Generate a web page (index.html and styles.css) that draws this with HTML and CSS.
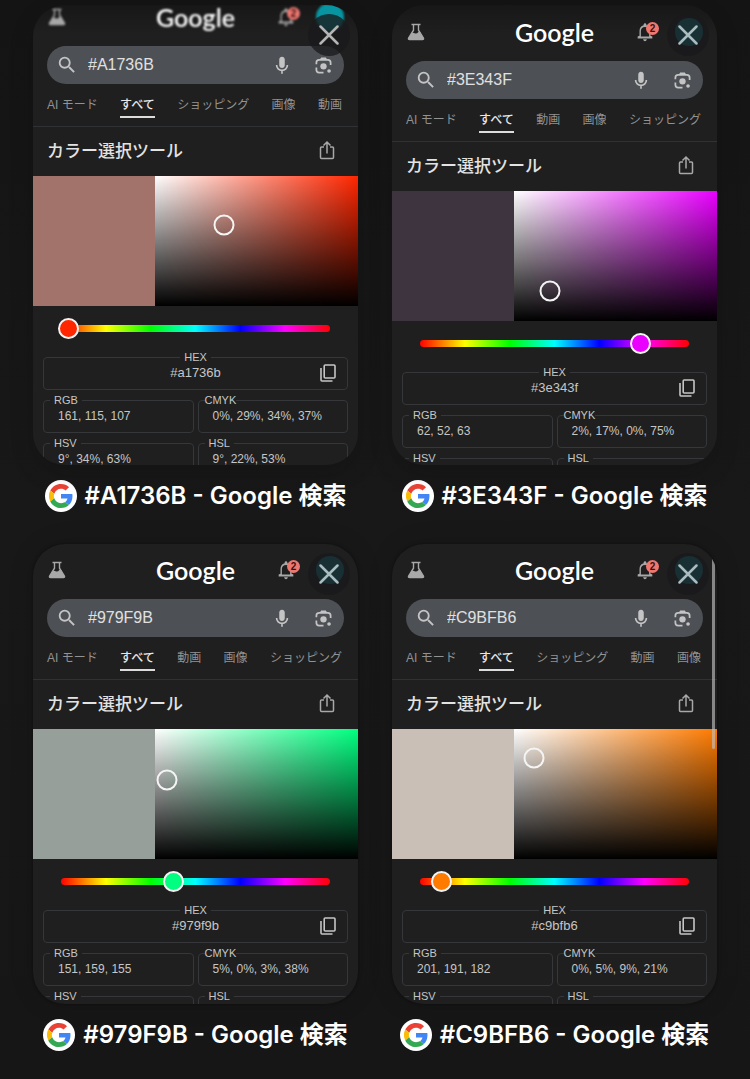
FILE: index.html
```
<!DOCTYPE html>
<html lang="ja">
<head>
<meta charset="utf-8">
<meta name="viewport" content="width=device-width, initial-scale=1">
<title>タブ一覧</title>
<link rel="stylesheet" href="styles.css">
</head>
<body>
<svg class="sprite" aria-hidden="true">
  <symbol id="flask" viewBox="0 0 18 18"><path d="M4.500 1.500h9M6.500 1.500v5.700L1.600 15q-.6 1.600 1 1.600h12.800q1.600 0 1-1.600L11.500 7.200V1.500" fill="none" stroke="currentColor" stroke-width="1.400"/><path d="M4.200 10.800q1.500-1.800 3.400-.6t3.800-1.100l1.500-.5 3.500 6.400q.6 1.800-1 1.800H2.600q-1.600 0-1-1.600z" fill="currentColor"/></symbol>
  <symbol id="bell" viewBox="0 0 24 24"><path d="M12 22c1.100 0 2-.9 2-2h-4c0 1.100.9 2 2 2zm6-6v-5c0-3.070-1.630-5.640-4.500-6.320V4c0-.83-.67-1.500-1.500-1.500s-1.500.67-1.500 1.500v.68C7.640 5.360 6 7.920 6 11v5l-2 1v2h16v-2l-2-1zm-1.500 1h-9v-6c0-2.480 1.510-4.500 4.500-4.500s4.500 2.020 4.500 4.500v6z" fill="currentColor"/></symbol>
  <symbol id="search" viewBox="0 0 24 24"><path d="M15.500 14h-.79l-.28-.27A6.470 6.470 0 0 0 16 9.500 6.500 6.500 0 1 0 9.500 16c1.610 0 3.090-.59 4.230-1.570l.27.28v.79l5 4.990L20.490 19l-4.990-5zm-6 0C7.010 14 5 11.990 5 9.500S7.010 5 9.500 5 14 7.010 14 9.500 11.990 14 9.500 14z" fill="currentColor"/></symbol>
  <symbol id="mic" viewBox="0 0 24 24"><path d="M12 15.500c1.900 0 3.300-1.400 3.300-3.300V5.300C15.300 3.400 13.900 2 12 2S8.700 3.400 8.700 5.300v6.900c0 1.900 1.400 3.300 3.300 3.300z" fill="currentColor"/><path d="M5.500 12a6.500 6.500 0 0 0 13 0M12 18.500v4" fill="none" stroke="currentColor" stroke-width="2"/></symbol>
  <symbol id="lens" viewBox="0 0 24 24"><path d="M3 10.500V8.500q0-3.500 3.500-3.500h11q3.500 0 3.500 3.500v3M3 14.500v3q0 3.500 3.500 3.500h5.500" fill="none" stroke="currentColor" stroke-width="2.200"/><path d="M7 5l2-3h6l2 3z" fill="currentColor"/><circle cx="12" cy="13" r="4" fill="currentColor"/><circle cx="19" cy="19" r="2.300" fill="currentColor"/></symbol>
  <symbol id="share" viewBox="0 0 16 20"><path d="M5 7H2.500Q1.500 7 1.500 8v9.500q0 1 1 1h11q1 0 1-1V8q0-1-1-1H11M8 13.500V2M4.500 5.500 8 2l3.500 3.500" fill="none" stroke="currentColor" stroke-width="1.500"/></symbol>
  <symbol id="copy" viewBox="0 0 16 18"><rect x="4.200" y="1" width="10.800" height="13" rx="1" fill="none" stroke="currentColor" stroke-width="1.600"/><path d="M1 4v12q0 1 1 1h10.500" fill="none" stroke="currentColor" stroke-width="1.600"/></symbol>
  <symbol id="close" viewBox="0 0 20 20"><path d="M1.500 1.500l17 17M18.500 1.500l-17 17" fill="none" stroke="currentColor" stroke-width="2.500" stroke-linecap="round"/></symbol>
  <symbol id="g" viewBox="0 0 48 48"><path fill="#ea4335" d="M24 9.500c3.540 0 6.710 1.220 9.210 3.600l6.850-6.850C35.900 2.380 30.470 0 24 0 14.620 0 6.510 5.380 2.560 13.220l7.980 6.190C12.430 13.720 17.740 9.500 24 9.500z"/><path fill="#4285f4" d="M46.980 24.550c0-1.570-.15-3.090-.38-4.550H24v9.020h12.940c-.58 2.960-2.260 5.480-4.780 7.180l7.730 6c4.510-4.180 7.090-10.360 7.090-17.650z"/><path fill="#fbbc05" d="M10.530 28.590a14.500 14.500 0 0 1 0-9.180l-7.980-6.190a24 24 0 0 0 0 21.560l7.980-6.190z"/><path fill="#34a853" d="M24 48c6.480 0 11.930-2.130 15.890-5.810l-7.730-6c-2.150 1.450-4.920 2.300-8.160 2.300-6.260 0-11.570-4.220-13.470-9.910l-7.980 6.190C6.510 42.620 14.620 48 24 48z"/></symbol>
</svg>
<main class="tabs-grid">

  <article class="tab">
    <div class="card card--faded">
      <div class="page page--scrolled">
        <header class="top">
          <svg class="flask"><use href="#flask"/></svg>
          <span class="logo">Google</span>
          <div class="account"><span class="alerts"><svg class="bell"><use href="#bell"/></svg><b class="badge">2</b></span><span class="avatar avatar--lit"></span></div>
        </header>
        <form class="search">
          <svg class="search__icon"><use href="#search"/></svg>
          <input class="search__box" type="text" aria-label="検索" value="#A1736B">
          <button class="icon-btn" type="button" aria-label="音声検索"><svg class="mic"><use href="#mic"/></svg></button>
          <button class="icon-btn" type="button" aria-label="画像で検索"><svg class="lens"><use href="#lens"/></svg></button>
        </form>
        <nav class="filters"><a href="#">AI モード</a><a class="is-on" href="#">すべて</a><a href="#">ショッピング</a><a href="#">画像</a><a href="#">動画</a></nav>
        <div class="heading"><h2>カラー選択ツール</h2><button class="icon-btn" type="button" aria-label="共有"><svg class="share"><use href="#share"/></svg></button></div>
        <div class="palette" style="--color:#a1736b;--hue:#ff2600"><div class="swatch"></div><div class="field"><span class="picker" style="left:34%;top:38%"></span></div></div>
        <div class="hue" style="--hue:#ff2600"><div class="hue__bar"></div><input class="hue__input" type="range" min="0" max="360" value="9" aria-label="色相"></div>
        <div class="values">
          <fieldset class="value value--hex"><legend>HEX</legend><div class="hex"><output>#a1736b</output><button class="icon-btn" type="button" aria-label="コピー"><svg class="copy"><use href="#copy"/></svg></button></div></fieldset>
          <fieldset class="value"><legend>RGB</legend><output>161, 115, 107</output></fieldset>
          <fieldset class="value"><legend class="tight">CMYK</legend><output>0%, 29%, 34%, 37%</output></fieldset>
          <fieldset class="value"><legend>HSV</legend><output>9°, 34%, 63%</output></fieldset>
          <fieldset class="value"><legend>HSL</legend><output>9°, 22%, 53%</output></fieldset>
        </div>
      </div>
      <button class="close" type="button" aria-label="タブを閉じる"><svg><use href="#close"/></svg></button>
    </div>
    <h3 class="caption"><span class="favicon"><svg><use href="#g"/></svg></span>#A1736B - Google 検索</h3>
  </article>

  <article class="tab">
    <div class="card card--faded">
      <div class="page page--pulled">
        <header class="top">
          <svg class="flask"><use href="#flask"/></svg>
          <span class="logo">Google</span>
          <div class="account"><span class="alerts"><svg class="bell"><use href="#bell"/></svg><b class="badge">2</b></span><span class="avatar"></span></div>
        </header>
        <form class="search">
          <svg class="search__icon"><use href="#search"/></svg>
          <input class="search__box" type="text" aria-label="検索" value="#3E343F">
          <button class="icon-btn" type="button" aria-label="音声検索"><svg class="mic"><use href="#mic"/></svg></button>
          <button class="icon-btn" type="button" aria-label="画像で検索"><svg class="lens"><use href="#lens"/></svg></button>
        </form>
        <nav class="filters"><a href="#">AI モード</a><a class="is-on" href="#">すべて</a><a href="#">動画</a><a href="#">画像</a><a href="#">ショッピング</a></nav>
        <div class="heading"><h2>カラー選択ツール</h2><button class="icon-btn" type="button" aria-label="共有"><svg class="share"><use href="#share"/></svg></button></div>
        <div class="palette" style="--color:#3e343f;--hue:#e900ff"><div class="swatch"></div><div class="field"><span class="picker" style="left:18%;top:77%"></span></div></div>
        <div class="hue" style="--hue:#e900ff"><div class="hue__bar"></div><input class="hue__input" type="range" min="0" max="360" value="296" aria-label="色相"></div>
        <div class="values">
          <fieldset class="value value--hex"><legend>HEX</legend><div class="hex"><output>#3e343f</output><button class="icon-btn" type="button" aria-label="コピー"><svg class="copy"><use href="#copy"/></svg></button></div></fieldset>
          <fieldset class="value"><legend>RGB</legend><output>62, 52, 63</output></fieldset>
          <fieldset class="value"><legend class="tight">CMYK</legend><output>2%, 17%, 0%, 75%</output></fieldset>
          <fieldset class="value"><legend>HSV</legend></fieldset>
          <fieldset class="value"><legend>HSL</legend></fieldset>
        </div>
      </div>
      <button class="close" type="button" aria-label="タブを閉じる"><svg><use href="#close"/></svg></button>
    </div>
    <h3 class="caption"><span class="favicon"><svg><use href="#g"/></svg></span>#3E343F - Google 検索</h3>
  </article>

  <article class="tab">
    <div class="card">
      <div class="page">
        <header class="top">
          <svg class="flask"><use href="#flask"/></svg>
          <span class="logo">Google</span>
          <div class="account"><span class="alerts"><svg class="bell"><use href="#bell"/></svg><b class="badge">2</b></span><span class="avatar"></span></div>
        </header>
        <form class="search">
          <svg class="search__icon"><use href="#search"/></svg>
          <input class="search__box" type="text" aria-label="検索" value="#979F9B">
          <button class="icon-btn" type="button" aria-label="音声検索"><svg class="mic"><use href="#mic"/></svg></button>
          <button class="icon-btn" type="button" aria-label="画像で検索"><svg class="lens"><use href="#lens"/></svg></button>
        </form>
        <nav class="filters"><a href="#">AI モード</a><a class="is-on" href="#">すべて</a><a href="#">動画</a><a href="#">画像</a><a href="#">ショッピング</a></nav>
        <div class="heading"><h2>カラー選択ツール</h2><button class="icon-btn" type="button" aria-label="共有"><svg class="share"><use href="#share"/></svg></button></div>
        <div class="palette" style="--color:#979f9b;--hue:#00ff80"><div class="swatch"></div><div class="field"><span class="picker" style="left:6%;top:39%"></span></div></div>
        <div class="hue" style="--hue:#00ff80"><div class="hue__bar"></div><input class="hue__input" type="range" min="0" max="360" value="151" aria-label="色相"></div>
        <div class="values">
          <fieldset class="value value--hex"><legend>HEX</legend><div class="hex"><output>#979f9b</output><button class="icon-btn" type="button" aria-label="コピー"><svg class="copy"><use href="#copy"/></svg></button></div></fieldset>
          <fieldset class="value"><legend>RGB</legend><output>151, 159, 155</output></fieldset>
          <fieldset class="value"><legend class="tight">CMYK</legend><output>5%, 0%, 3%, 38%</output></fieldset>
          <fieldset class="value"><legend>HSV</legend></fieldset>
          <fieldset class="value"><legend>HSL</legend></fieldset>
        </div>
      </div>
      <button class="close" type="button" aria-label="タブを閉じる"><svg><use href="#close"/></svg></button>
    </div>
    <h3 class="caption"><span class="favicon"><svg><use href="#g"/></svg></span>#979F9B - Google 検索</h3>
  </article>

  <article class="tab">
    <div class="card">
      <div class="page">
        <header class="top">
          <svg class="flask"><use href="#flask"/></svg>
          <span class="logo">Google</span>
          <div class="account"><span class="alerts"><svg class="bell"><use href="#bell"/></svg><b class="badge">2</b></span><span class="avatar"></span></div>
        </header>
        <form class="search">
          <svg class="search__icon"><use href="#search"/></svg>
          <input class="search__box" type="text" aria-label="検索" value="#C9BFB6">
          <button class="icon-btn" type="button" aria-label="音声検索"><svg class="mic"><use href="#mic"/></svg></button>
          <button class="icon-btn" type="button" aria-label="画像で検索"><svg class="lens"><use href="#lens"/></svg></button>
        </form>
        <nav class="filters"><a href="#">AI モード</a><a class="is-on" href="#">すべて</a><a href="#">ショッピング</a><a href="#">動画</a><a href="#">画像</a></nav>
        <div class="heading"><h2>カラー選択ツール</h2><button class="icon-btn" type="button" aria-label="共有"><svg class="share"><use href="#share"/></svg></button></div>
        <div class="palette" style="--color:#c9bfb6;--hue:#ff7b00"><div class="swatch"></div><div class="field"><span class="picker" style="left:10%;top:22%"></span></div></div>
        <div class="hue" style="--hue:#ff7b00"><div class="hue__bar"></div><input class="hue__input" type="range" min="0" max="360" value="28" aria-label="色相"></div>
        <div class="values">
          <fieldset class="value value--hex"><legend>HEX</legend><div class="hex"><output>#c9bfb6</output><button class="icon-btn" type="button" aria-label="コピー"><svg class="copy"><use href="#copy"/></svg></button></div></fieldset>
          <fieldset class="value"><legend>RGB</legend><output>201, 191, 182</output></fieldset>
          <fieldset class="value"><legend class="tight">CMYK</legend><output>0%, 5%, 9%, 21%</output></fieldset>
          <fieldset class="value"><legend>HSV</legend></fieldset>
          <fieldset class="value"><legend>HSL</legend></fieldset>
        </div>
      </div>
      <button class="close" type="button" aria-label="タブを閉じる"><svg><use href="#close"/></svg></button>
      <span class="scrollbar"></span>
    </div>
    <h3 class="caption"><span class="favicon"><svg><use href="#g"/></svg></span>#C9BFB6 - Google 検索</h3>
  </article>

</main>
</body>
</html>
```
FILE: styles.css
```
* { box-sizing: border-box; }

body {
  margin: 0;
  min-height: 100vh;
  background: linear-gradient(#141414, #181818 50%, #161616);
  color: #e3e3e3;
  font-family: "Liberation Sans", "Noto Sans CJK JP", sans-serif;
}

svg { display: block; }
.sprite { position: absolute; width: 0; height: 0; }

.tabs-grid {
  display: grid;
  grid-template-columns: 1fr 1fr;
  gap: 32px 34px;
  padding: 5px 33px 29px;
}

.tab {
  display: flex;
  flex-direction: column;
  gap: 15px;
  min-width: 0;
}

.card {
  position: relative;
  aspect-ratio: 325 / 460;
  overflow: hidden;
  border-radius: 32px;
  background: #1f1f1f;
  box-shadow: 0 0 2px #0c0c0c, 0 0 24px rgba(0, 0, 0, .15);
}

.card--faded {
  background: linear-gradient(#171717, #1f1f1f 28px);
  box-shadow: 0 8px 24px rgba(0, 0, 0, .15);
}

.page { display: flow-root; }
.page--scrolled { margin-top: -14px; }
.page--pulled { padding-top: 1px; }
.page--scrolled .top { filter: blur(1px); }

.top {
  display: grid;
  grid-template-columns: 1fr auto 1fr;
  align-items: center;
  height: 55px;
  padding: 0 14px 3px;
}
.flask { width: 18px; height: 18px; margin-left: 1px; color: #a8a8a8; }

.logo {
  color: #fff;
  font: 600 25px/32px Lato, sans-serif;
}

.account {
  display: flex;
  align-items: center;
  justify-content: flex-end;
  gap: 19px;
}
.alerts { position: relative; color: #a8a8a8; }
.bell { width: 22px; height: 22px; }
.badge {
  position: absolute;
  top: 1px;
  right: -3px;
  width: 13px;
  height: 13px;
  border-radius: 50%;
  background: #ee7770;
  color: #3c1210;
  font-size: 10px;
  line-height: 13px;
  text-align: center;
}

.avatar {
  width: 28px;
  height: 28px;
  border-radius: 50%;
  background: #127b86;
}
.avatar--lit { background: #0795a1; }

.search {
  display: flex;
  align-items: center;
  height: 38px;
  margin: 0 14px;
  padding: 0 11px 0 9px;
  border-radius: 19px;
  background: #4d5156;
  color: #c4c4c4;
}
.search__icon { flex: none; width: 22px; height: 22px; }
.search__box {
  flex: 1;
  min-width: 0;
  margin-left: 10px;
  padding: 0;
  border: 0;
  outline: 0;
  background: none;
  color: #e0e0e0;
  font: 16px/20px "Liberation Sans", sans-serif;
}
.icon-btn {
  display: block;
  padding: 0;
  border: 0;
  background: none;
  color: inherit;
}
.mic { width: 20px; height: 20px; }
.lens { width: 19px; height: 19px; margin-left: 22px; }

.filters {
  display: flex;
  justify-content: space-between;
  height: 43px;
  padding: 10px 16px 0 14px;
  border-bottom: 1px solid #303134;
}
.filters a {
  height: 24px;
  color: #929292;
  font-size: 12px;
  line-height: 22px;
  text-decoration: none;
  white-space: nowrap;
}
.filters .is-on {
  border-bottom: 2px solid #dcdcdc;
  color: #e8e8e8;
  font-weight: 500;
}

.heading {
  display: flex;
  align-items: center;
  justify-content: space-between;
  height: 49px;
  padding: 0 23px 3px 14px;
  color: #a8a8a8;
}
.heading h2 {
  margin: 0;
  color: #e3e3e3;
  font: 500 17px/24px "Noto Sans CJK JP", sans-serif;
}
.share { width: 16px; height: 20px; }

.palette {
  display: grid;
  grid-template-columns: 3fr 5fr;
  height: 130px;
}
.swatch { background: var(--color); }
.field {
  position: relative;
  background: linear-gradient(transparent, #000), linear-gradient(90deg, #fff, var(--hue));
}
.picker {
  position: absolute;
  width: 21px;
  height: 21px;
  border: 2px solid #f4f4f4;
  border-radius: 50%;
  transform: translate(-50%, -50%);
}

.hue {
  display: grid;
  align-items: center;
  height: 45px;
  padding: 0 28px;
}
.hue__bar, .hue__input { grid-area: 1 / 1; }
.hue__bar {
  height: 7px;
  border-radius: 4px;
  background: linear-gradient(90deg, #f00, #ff0, #0f0, #0ff, #00f, #f0f, #f00);
}
.hue__input {
  height: 21px;
  margin: 0 -10px;
  appearance: none;
  background: none;
}
.hue__input::-webkit-slider-thumb {
  appearance: none;
  width: 21px;
  height: 21px;
  border: 2px solid #f4f4f4;
  border-radius: 50%;
  background: var(--hue);
}

.values {
  display: grid;
  grid-template-columns: 1fr 1fr;
  gap: 4px;
  padding: 0 10px;
}
.value {
  min-width: 0;
  height: 39px;
  margin: 0;
  padding: 0 6px;
  border: 1px solid #35373a;
  border-radius: 4px;
  color: #c6c6c6;
  font-size: 12px;
  line-height: 20px;
}
.value legend {
  padding: 0 4px;
  font-size: 11px;
  line-height: 12px;
}
.value .tight { padding: 0; }
.value > output { display: block; padding-left: 8px; white-space: nowrap; }
.value--hex { grid-column: 1 / -1; }
.value--hex legend { margin: 0 auto; }
.hex {
  display: grid;
  grid-template-columns: 1fr auto 1fr;
  align-items: center;
}
.hex output { grid-column: 2; font-size: 13px; }
.hex .icon-btn { justify-self: end; margin-right: 5px; }
.copy { width: 16px; height: 18px; }

.close {
  position: absolute;
  top: 9px;
  right: 8px;
  display: grid;
  place-items: center;
  width: 42px;
  height: 42px;
  padding: 0;
  border: 0;
  border-radius: 50%;
  background: rgba(26, 26, 28, .78);
  color: #a9bdc0;
}
.card--faded .page--scrolled + .close { color: #b4b4b4; }
.close svg { width: 20px; height: 20px; }

.scrollbar {
  position: absolute;
  top: 12px;
  right: 2px;
  width: 3px;
  height: 42%;
  border-radius: 2px;
  background: rgba(190, 190, 190, .65);
}

.caption {
  display: flex;
  align-items: center;
  justify-content: center;
  gap: 8px;
  height: 32px;
  margin: 0;
  color: #fff;
  font: 600 24px/32px Inter, "Noto Sans CJK JP", sans-serif;
  white-space: nowrap;
}
.favicon {
  display: grid;
  place-items: center;
  width: 32px;
  height: 32px;
  border-radius: 50%;
  background: #fff;
}
.favicon svg { width: 24px; height: 24px; }
```
